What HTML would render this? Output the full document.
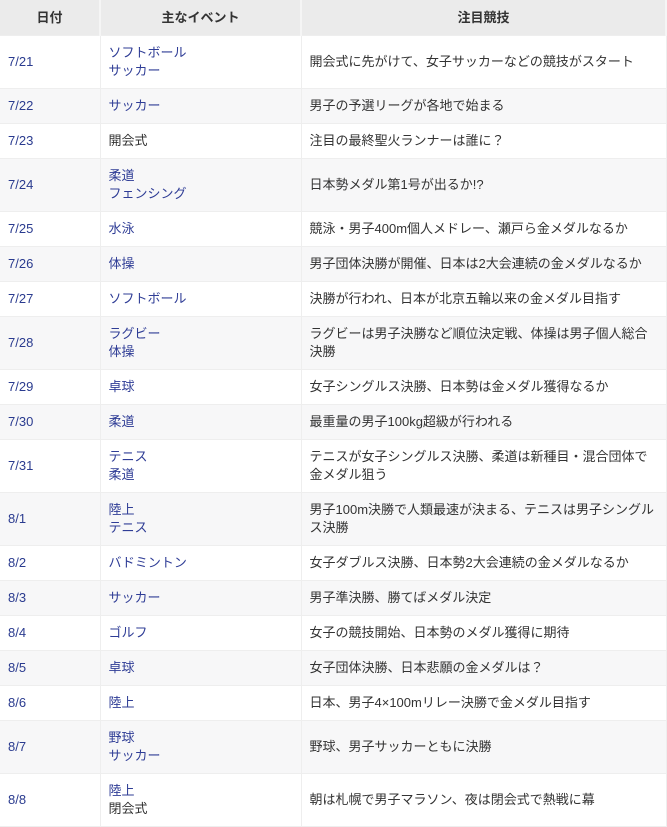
<!DOCTYPE html><html><head><meta charset="utf-8"><style>
body{margin:0;background:#fff;font-family:"Liberation Sans","Noto Sans CJK JP",sans-serif;font-size:13px;color:#333}
table{border-collapse:collapse;width:667px;table-layout:fixed}
td,th{border:1px solid #eee;border-top:none;border-left:none;padding:0 6px 0 8px;line-height:18px;vertical-align:middle}
th{background:#ebebeb;height:35px;font-weight:bold;text-align:center;padding:0;border-right:2px solid #f5f5f5}
tr{height:35px}
tr.d{height:53px}
tbody tr:nth-child(even){background:#f7f7f8}
td:nth-child(1){color:#2a3b8f}
td:nth-child(2){color:#333}
.b{color:#2f3d96}
</style></head><body><table>
<colgroup><col style="width:100px"><col style="width:201px"><col></colgroup>
<thead><tr><th>日付</th><th>主なイベント</th><th>注目競技</th></tr></thead><tbody>
<tr class="d"><td>7/21</td><td><span class="b">ソフトボール<br>サッカー</span></td><td>開会式に先がけて、女子サッカーなどの競技がスタート</td></tr>
<tr><td>7/22</td><td><span class="b">サッカー</span></td><td>男子の予選リーグが各地で始まる</td></tr>
<tr><td>7/23</td><td>開会式</td><td>注目の最終聖火ランナーは誰に？</td></tr>
<tr class="d"><td>7/24</td><td><span class="b">柔道<br>フェンシング</span></td><td>日本勢メダル第1号が出るか!?</td></tr>
<tr><td>7/25</td><td><span class="b">水泳</span></td><td>競泳・男子400m個人メドレー、瀬戸ら金メダルなるか</td></tr>
<tr><td>7/26</td><td><span class="b">体操</span></td><td>男子団体決勝が開催、日本は2大会連続の金メダルなるか</td></tr>
<tr><td>7/27</td><td><span class="b">ソフトボール</span></td><td>決勝が行われ、日本が北京五輪以来の金メダル目指す</td></tr>
<tr class="d"><td>7/28</td><td><span class="b">ラグビー<br>体操</span></td><td>ラグビーは男子決勝など順位決定戦、体操は男子個人総合<br>決勝</td></tr>
<tr><td>7/29</td><td><span class="b">卓球</span></td><td>女子シングルス決勝、日本勢は金メダル獲得なるか</td></tr>
<tr><td>7/30</td><td><span class="b">柔道</span></td><td>最重量の男子100kg超級が行われる</td></tr>
<tr class="d"><td>7/31</td><td><span class="b">テニス<br>柔道</span></td><td>テニスが女子シングルス決勝、柔道は新種目・混合団体で<br>金メダル狙う</td></tr>
<tr class="d"><td>8/1</td><td><span class="b">陸上<br>テニス</span></td><td>男子100m決勝で人類最速が決まる、テニスは男子シングル<br>ス決勝</td></tr>
<tr><td>8/2</td><td><span class="b">バドミントン</span></td><td>女子ダブルス決勝、日本勢2大会連続の金メダルなるか</td></tr>
<tr><td>8/3</td><td><span class="b">サッカー</span></td><td>男子準決勝、勝てばメダル決定</td></tr>
<tr><td>8/4</td><td><span class="b">ゴルフ</span></td><td>女子の競技開始、日本勢のメダル獲得に期待</td></tr>
<tr><td>8/5</td><td><span class="b">卓球</span></td><td>女子団体決勝、日本悲願の金メダルは？</td></tr>
<tr><td>8/6</td><td><span class="b">陸上</span></td><td>日本、男子4×100mリレー決勝で金メダル目指す</td></tr>
<tr class="d"><td>8/7</td><td><span class="b">野球<br>サッカー</span></td><td>野球、男子サッカーともに決勝</td></tr>
<tr class="d"><td>8/8</td><td><span class="b">陸上</span><br>閉会式</td><td>朝は札幌で男子マラソン、夜は閉会式で熱戦に幕</td></tr>
</tbody></table></body></html>
